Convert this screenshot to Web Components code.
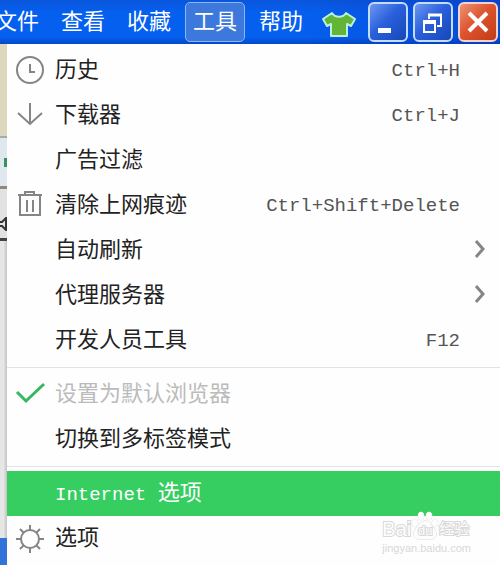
<!DOCTYPE html>
<html lang="zh-CN">
<head>
<meta charset="utf-8">
<meta name="viewport" content="width=device-width, initial-scale=1">
<title>工具</title>
<style>
    body {
        margin: 0;
        background: #fff;
        color: #222;
        font-family: "Liberation Mono", "Noto Sans CJK SC", monospace;
        font-size: 22px;
        line-height: 28px;
        overflow: hidden;
    }
</style>
</head>
<body>

<browser-window>
    <title-bar slot="title">
        <menu-tab>文件</menu-tab>
        <menu-tab>查看</menu-tab>
        <menu-tab>收藏</menu-tab>
        <menu-tab active>工具</menu-tab>
        <menu-tab>帮助</menu-tab>
        <window-button slot="controls" kind="minimize" label="最小化"></window-button>
        <window-button slot="controls" kind="restore" label="还原"></window-button>
        <window-button slot="controls" kind="close" label="关闭"></window-button>
    </title-bar>
    <page-edge slot="edge"></page-edge>
    <tools-menu>
        <menu-row icon="clock" keys="Ctrl+H">历史</menu-row>
        <menu-row icon="arrow" keys="Ctrl+J">下载器</menu-row>
        <menu-row>广告过滤</menu-row>
        <menu-row icon="trash" keys="Ctrl+Shift+Delete">清除上网痕迹</menu-row>
        <menu-row submenu>自动刷新</menu-row>
        <menu-row submenu>代理服务器</menu-row>
        <menu-row keys="F12">开发人员工具</menu-row>
        <menu-line></menu-line>
        <menu-row icon="check" disabled>设置为默认浏览器</menu-row>
        <menu-row>切换到多标签模式</menu-row>
        <menu-line></menu-line>
        <menu-row selected><span class="latin">Internet </span>选项</menu-row>
        <menu-row icon="gear">选项</menu-row>
    </tools-menu>
    <site-mark slot="mark"></site-mark>
</browser-window>

<script>
// ======================================================
// Icons
// ======================================================

const ICONS = {
    clock: `<svg width="30" height="30" viewBox="0 0 30 30" fill="none" stroke="#858585" stroke-width="2">
        <circle cx="15" cy="14" r="13"/><path d="M15 8v8h5"/></svg>`,
    arrow: `<svg width="30" height="30" viewBox="0 0 30 30" fill="none" stroke="#858585" stroke-width="2">
        <path d="M15 2v21M3 12l12 11 12-11"/></svg>`,
    trash: `<svg width="30" height="30" viewBox="0 0 30 30" fill="none" stroke="#858585" stroke-width="2">
        <path d="M3 4h24M10 4V1h9v3M5 4v20h20V4M12 9v12M18 9v12"/></svg>`,
    check: `<svg width="30" height="30" viewBox="0 0 30 30" fill="none" stroke="#35b860" stroke-width="3">
        <path d="M2 12l9 9L29 4"/></svg>`,
    gear: `<svg width="30" height="30" viewBox="0 0 30 30" fill="none" stroke="#858585" stroke-width="2">
        <circle cx="15" cy="15" r="9"/>
        <path d="M15 1v5M15 24v5M1 15h5M24 15h5M5 5l4 4M21 21l4 4M25 5l-4 4M9 21l-4 4"/></svg>`,
    chevron: `<svg width="12" height="22" viewBox="0 0 12 22" fill="none" stroke="#858585" stroke-width="3">
        <path d="M2 1l7 8-7 8"/></svg>`,
    shirt: `<svg width="36" height="28" viewBox="0 0 36 28">
        <path d="M11 3C14 8 22 8 25 3L34 9 30 16 26 14V26H10V14L6 16 2 9Z" fill="#62b536" stroke="#bdf0dc" stroke-width="2" stroke-linejoin="round"/></svg>`,
    minimize: `<svg width="36" height="36" viewBox="0 0 36 36"><path d="M8 24h13v5H8z" fill="#fff"/></svg>`,
    restore: `<svg width="36" height="36" viewBox="0 0 36 36" fill="none" stroke="#fff">
        <path d="M14 15v-4h12v11h-4" stroke-width="2"/><path d="M13 11h14" stroke-width="3"/>
        <path d="M9 18v10h11V18" stroke-width="2"/><path d="M8 18h13" stroke-width="4"/></svg>`,
    close: `<svg width="36" height="36" viewBox="0 0 36 36"><path d="M9 9l18 18M27 9L9 27" stroke="#fff" stroke-width="4"/></svg>`
};

/**
 * Attach an open shadow root and fill it
 * @param {HTMLElement} host
 * @param {string} html
 */
function render(host, html) {
    host.attachShadow({ mode: 'open' }).innerHTML = html;
}

// ======================================================
// Window frame
// ======================================================

class BrowserWindow extends HTMLElement {
    constructor() {
        super();
        render(this, `
<style>
:host { display: block; position: relative; }
.body { display: grid; grid-template-columns: 7px 1fr; }
</style>
<slot name="title"></slot>
<div class="body">
    <slot name="edge"></slot>
    <slot></slot>
</div>
<slot name="mark"></slot>`);
    }
}

class TitleBar extends HTMLElement {
    constructor() {
        super();
        render(this, `
<style>
:host {
    display: flex;
    align-items: center;
    justify-content: space-between;
    height: 44px;
    box-sizing: border-box;
    padding: 0 2px 1px 0;
    background:
        linear-gradient(90deg, transparent 60%, rgba(10, 50, 180, .5)),
        linear-gradient(#0a56dc, #0560f0 30%, #0560ee 85%, #0447c8);
}
nav, .controls { display: flex; align-items: center; }
nav { gap: 6px; margin-left: -13px; }
.controls { gap: 5px; }
.skin { border: 0; padding: 4px 0 0; margin-right: 6px; background: none; }
svg { display: block; }
</style>
<nav><slot></slot></nav>
<div class="controls">
    <button class="skin" aria-label="皮肤">${ICONS.shirt}</button>
    <slot name="controls"></slot>
</div>`);
    }
}

class MenuTab extends HTMLElement {
    constructor() {
        super();
        render(this, `
<style>
:host { display: block; }
button {
    display: block;
    font: inherit;
    color: #fff;
    white-space: nowrap;
    padding: 7px 7px 3px;
    border: 1px solid transparent;
    border-radius: 5px;
    background: none;
}
:host([active]) button {
    border-color: #8fb5f5;
    background: #3d79dc;
}
</style>
<button><slot></slot></button>`);
    }
}

class WindowButton extends HTMLElement {
    connectedCallback() {
        const kind = this.getAttribute('kind');
        render(this, `
<style>
:host { display: block; }
button {
    display: block;
    padding: 0;
    border: 2px solid #c4dcff;
    border-radius: 6px;
    background: linear-gradient(135deg, #6d98f0, #2a60dc 45%, #1747b8);
}
:host([kind="close"]) button {
    border-color: #f3d3cb;
    background: linear-gradient(135deg, #ec9474, #de5430 45%, #c03c14);
}
svg { display: block; }
</style>
<button aria-label="${this.getAttribute('label')}">${ICONS[kind]}</button>`);
    }
}

// Sliver of the page that stays visible left of the menu
class PageEdge extends HTMLElement {
    constructor() {
        super();
        render(this, `
<style>
:host { display: flex; flex-direction: column; background: #e2e2e2; }
.bar { height: 92px; background: #ddd7bd; border-bottom: 2px solid #aaa; }
.address { height: 48px; display: flex; align-items: center; justify-content: flex-end; background: #dfe8ef; }
.address i { width: 3px; height: 9px; background: #38925b; }
.rule { height: 3px; background: #8d8a7c; }
.tabs { height: 49px; display: flex; align-items: center; border-bottom: 3px solid #444; }
.tabs svg { margin-top: 20px; }
.page { flex: 1; background: linear-gradient(90deg, #e6e6e6 50%, #c2c2c2); }
.task { height: 27px; background: #3173d8; }
</style>
<div class="bar"></div>
<div class="address"><i></i></div>
<div class="rule"></div>
<div class="tabs"><svg width="7" height="14" viewBox="0 0 7 14"><path d="M0 5h2l4-4v12L2 9H0" fill="none" stroke="#333" stroke-width="2"/></svg></div>
<div class="page"></div>
<div class="task"></div>`);
    }
}

// ======================================================
// Menu
// ======================================================

class ToolsMenu extends HTMLElement {
    constructor() {
        super();
        render(this, `
<style>
:host { display: block; padding: 4px 0; background: #fefefe; border-top-left-radius: 4px; }
</style>
<div role="menu"><slot></slot></div>`);
    }
}

class MenuRow extends HTMLElement {
    connectedCallback() {
        const icon = ICONS[this.getAttribute('icon')] || '';
        const keys = this.getAttribute('keys');
        const off = this.hasAttribute('disabled') ? 'disabled' : '';
        render(this, `
<style>
:host { display: block; }
button {
    display: grid;
    grid-template-columns: 30px 1fr auto;
    column-gap: 10px;
    align-items: center;
    width: 100%;
    height: 45px;
    padding: 0 40px 0 8px;
    border: 0;
    background: none;
    color: #222;
    font: inherit;
    text-align: left;
    white-space: pre;
}
button:disabled { color: #bbb; }
:host([selected]) button { background: #36cd61; color: #fff; }
:host([submenu]) button { padding-right: 14px; }
.label { padding-top: 3px; }
::slotted(.latin), kbd { font-family: "Liberation Mono", monospace; font-size: 19px; }
kbd { color: #555; }
svg { display: block; }
</style>
<button role="menuitem" ${off}><span>${icon}</span><span class="label"><slot></slot></span>${
    keys ? `<kbd>${keys}</kbd>` : this.hasAttribute('submenu') ? ICONS.chevron : ''
}</button>`);
    }
}

class MenuLine extends HTMLElement {
    constructor() {
        super();
        render(this, `
<style>
:host { display: block; padding: 4px 0; }
hr { margin: 0; border: 0; border-top: 1px solid #e2e2e2; }
</style>
<hr>`);
    }
}

// ======================================================
// Site mark, laid over the lower right corner
// ======================================================

class SiteMark extends HTMLElement {
    constructor() {
        super();
        render(this, `
<style>
:host {
    position: absolute;
    right: 29px;
    bottom: 10px;
    pointer-events: none;
    color: #fdfdfd;
    font-family: "Liberation Sans", "Noto Sans CJK SC", sans-serif;
    -webkit-text-stroke: 2px #d8d8d8;
    paint-order: stroke fill;
}
.name { display: flex; align-items: flex-end; font-size: 20px; line-height: 24px; }
.cjk { font-size: 15px; }
.paw { display: grid; }
.paw > * { grid-area: 1 / 1; }
.paw span { align-self: end; text-align: center; font-size: 13px; line-height: 20px; }
.site { font-size: 11px; line-height: 14px; color: #d8d8d8; -webkit-text-stroke: 0; }
svg { display: block; }
</style>
<div class="name"><span>Bai</span><span class="paw"><svg width="28" height="30" viewBox="0 0 28 30" fill="#fdfdfd" stroke="#d8d8d8">
    <ellipse cx="4" cy="12" rx="3" ry="4"/><ellipse cx="10" cy="5" rx="3" ry="4"/>
    <ellipse cx="18" cy="5" rx="3" ry="4"/><ellipse cx="24" cy="12" rx="3" ry="4"/>
    <path d="M14 10c-4 0-5 3-8 6-5 5-4 12 2 12h12c6 0 7-7 2-12-3-3-4-6-8-6z"/></svg><span>du</span></span><span class="cjk">经验</span></div>
<div class="site">jingyan.baidu.com</div>`);
    }
}

// ======================================================
// Registration
// ======================================================

customElements.define('browser-window', BrowserWindow);
customElements.define('title-bar', TitleBar);
customElements.define('menu-tab', MenuTab);
customElements.define('window-button', WindowButton);
customElements.define('page-edge', PageEdge);
customElements.define('tools-menu', ToolsMenu);
customElements.define('menu-row', MenuRow);
customElements.define('menu-line', MenuLine);
customElements.define('site-mark', SiteMark);
</script>
</body>
</html>
